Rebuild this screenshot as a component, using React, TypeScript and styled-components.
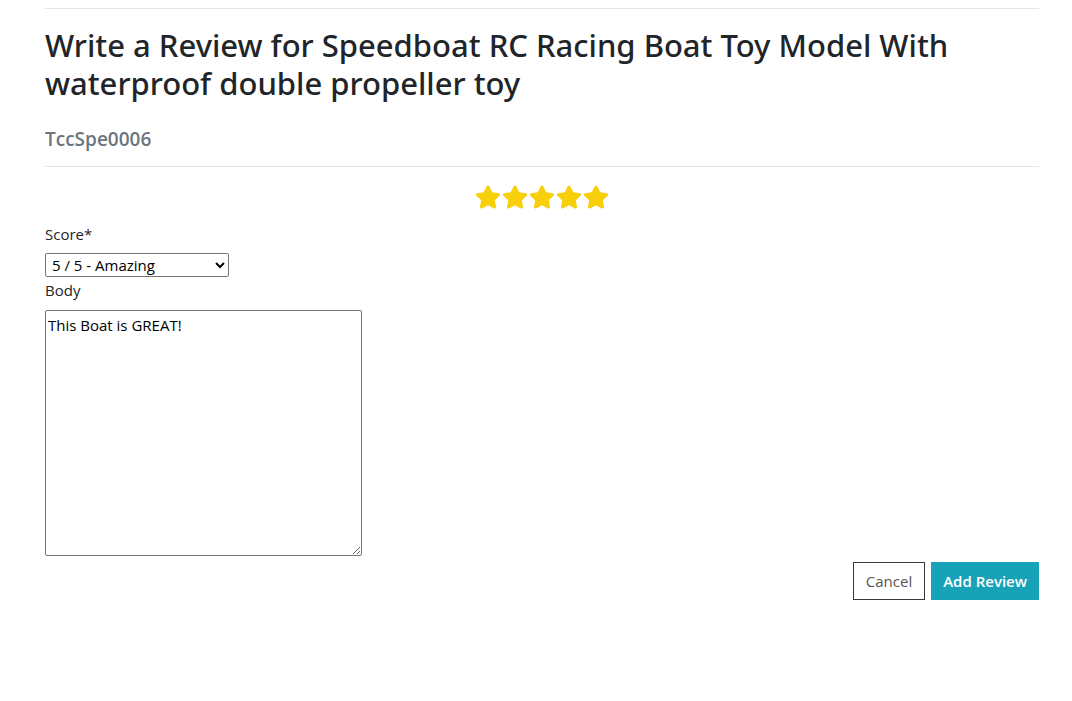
import React, { useState } from "react";
import styled, { createGlobalStyle } from "styled-components";
import { FaStar } from "react-icons/fa";

const Global = createGlobalStyle`
  html, body { margin: 0; padding: 0; background: #fff; }
  body { font-family: "Open Sans", "Noto Sans", sans-serif; color: #212529; }
`;

const Page = styled.div`
  padding: 8px 33px 0 45px;
`;

const Rule = styled.hr`
  border: 0;
  border-top: 1px solid #e3e5e7;
  margin: 0;
`;

const Title = styled.h2`
  margin: 17px 0 0;
  font-family: "Noto Sans", "Open Sans", sans-serif;
  font-size: 31px;
  font-weight: 500;
  line-height: 38px;
  color: #212529;
`;

const Sku = styled.h5`
  margin: 25px 0 15px;
  font-size: 19px;
  font-weight: 600;
  line-height: 24px;
  color: #6c757d;
`;

const Stars = styled.div`
  display: flex;
  justify-content: center;
  gap: 1px;
  margin: 17px 0 12px;
  color: #f7cf0a;
  font-size: 26px;
  line-height: 0;
`;

const Label = styled.label`
  display: block;
  font-size: 15px;
  line-height: 24px;
  color: #212529;
`;

const Select = styled.select`
  display: block;
  margin: 7px 0 1px;
  width: 184px;
  height: 24px;
  font-family: "Open Sans", "Noto Sans", sans-serif;
  font-size: 15px;
  color: #000;
  border: 1px solid #767676;
  border-radius: 2px;
  background: #fff;
  padding: 0 2px;
`;

const TextArea = styled.textarea`
  display: block;
  margin-top: 8px;
  width: 317px;
  height: 246px;
  box-sizing: border-box;
  font-family: "Open Sans", "Noto Sans", sans-serif;
  font-size: 15px;
  line-height: 20px;
  padding: 4px 2px;
  border: 1px solid #767676;
  border-radius: 2px;
  color: #000;
`;

const Actions = styled.div`
  display: flex;
  justify-content: flex-end;
  gap: 6px;
  margin-top: 6px;
`;

const Button = styled.button<{ $primary?: boolean }>`
  height: 38px;
  padding: 0 ${(p) => (p.$primary ? "11px" : "12px")};
  font-family: "Open Sans", "Noto Sans", sans-serif;
  font-size: 15px;
  font-weight: ${(p) => (p.$primary ? 600 : 400)};
  border-radius: 0;
  cursor: pointer;
  border: 1px solid ${(p) => (p.$primary ? "#17a2b8" : "#343a40")};
  background: ${(p) => (p.$primary ? "#17a2b8" : "#fff")};
  color: ${(p) => (p.$primary ? "#fff" : "#555")};
`;

export default function App() {
  const [score, setScore] = useState("5");
  const [body, setBody] = useState("This Boat is GREAT!");
  return (
    <Page>
      <Global />
      <Rule />
      <Title>Write a Review for Speedboat RC Racing Boat Toy Model With waterproof double propeller toy</Title>
      <Sku>TccSpe0006</Sku>
      <Rule />
      <Stars>
        {[0, 1, 2, 3, 4].map((i) => (
          <FaStar key={i} />
        ))}
      </Stars>
      <Label htmlFor="score">Score*</Label>
      <Select id="score" value={score} onChange={(e) => setScore(e.target.value)}>
        <option value="5">5 / 5 - Amazing</option>
        <option value="4">4 / 5 - Good</option>
        <option value="3">3 / 5 - Okay</option>
        <option value="2">2 / 5 - Poor</option>
        <option value="1">1 / 5 - Terrible</option>
      </Select>
      <Label htmlFor="body">Body</Label>
      <TextArea id="body" value={body} onChange={(e) => setBody(e.target.value)} />
      <Actions>
        <Button type="button">Cancel</Button>
        <Button type="button" $primary>Add Review</Button>
      </Actions>
    </Page>
  );
}
